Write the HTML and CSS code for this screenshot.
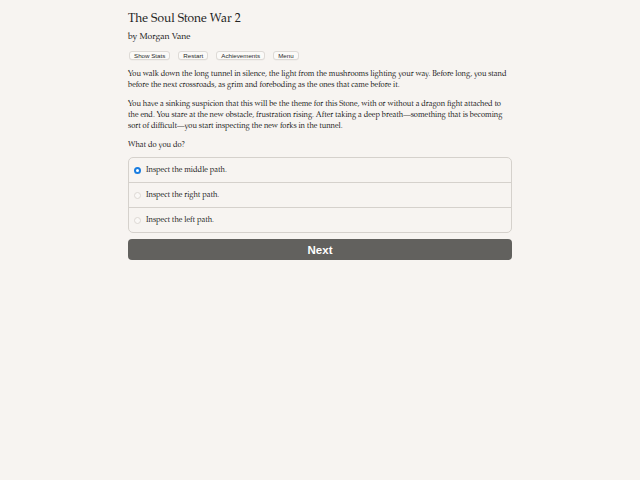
FILE: index.html
```html
<!DOCTYPE html>
<html>
<head>
<meta charset="utf-8">
<link rel="stylesheet" href="styles.css">
</head>
<body>
<div class="page">
  <h1 class="title">The Soul Stone War 2</h1>
  <p class="author">by Morgan Vane</p>
  <div class="toolbar">
    <button class="tool">Show Stats</button>
    <button class="tool">Restart</button>
    <button class="tool">Achievements</button>
    <button class="tool">Menu</button>
  </div>
  <p class="text">You walk down the long tunnel in silence, the light from the mushrooms lighting your way. Before long, you stand before the next crossroads, as grim and foreboding as the ones that came before it.</p>
  <p class="text">You have a sinking suspicion that this will be the theme for this Stone, with or without a dragon fight attached to the end. You stare at the new obstacle, frustration rising. After taking a deep breath—something that is becoming sort of difficult—you start inspecting the new forks in the tunnel.</p>
  <p class="text">What do you do?</p>
  <div class="choices">
    <label class="choice"><span class="radio checked"></span>Inspect the middle path.</label>
    <label class="choice"><span class="radio"></span>Inspect the right path.</label>
    <label class="choice"><span class="radio"></span>Inspect the left path.</label>
  </div>
  <button class="next">Next</button>
</div>
</body>
</html>
```

FILE: styles.css
```css
html, body {
  margin: 0;
  padding: 0;
  background: #f7f4f1;
}

.page {
  width: 384px;
  margin: 0 auto;
  padding-top: 10px;
  font-family: "TeX Gyre Pagella", "Liberation Serif", serif;
  color: #222;
}

.title {
  margin: 0;
  font-size: 12px;
  font-weight: normal;
  line-height: 18px;
}

.author {
  margin: 2px 0 0;
  font-size: 8.6px;
  line-height: 14px;
}

.toolbar {
  display: flex;
  gap: 8px;
  margin-top: 7px;
  padding: 0 0 1px 1px;
}

.tool {
  font-family: "Liberation Sans", sans-serif;
  font-size: 6.2px;
  color: #2a2a2a;
  background: #fbfaf8;
  border: 1px solid #dedad6;
  border-radius: 3px;
  box-shadow: 0 0.5px 0 rgba(0, 0, 0, 0.05);
  height: 9px;
  padding: 0 4px;
  line-height: 7px;
}

.text {
  margin: 8px 0 0;
  font-size: 7.5px;
  line-height: 11px;
}

.choices {
  margin-top: 6px;
  border: 1px solid #d5d1cc;
  border-radius: 5px;
  overflow: hidden;
}

.choice {
  display: flex;
  align-items: center;
  height: 24px;
  padding-left: 5px;
  font-size: 7.5px;
  border-top: 1px solid #d5d1cc;
}

.choice:first-child {
  border-top: none;
}

.radio {
  width: 5px;
  height: 5px;
  border-radius: 50%;
  border: 1px solid #dcd8d4;
  background: #faf8f6;
  margin-right: 5px;
}

.radio.checked {
  width: 3px;
  height: 3px;
  border: 2px solid #1a7de0;
  background: #fff;
}

.next {
  display: block;
  width: 100%;
  margin-top: 6px;
  height: 21px;
  border: none;
  border-radius: 4px;
  background: #62615e;
  color: #fff;
  font-family: "Liberation Sans", sans-serif;
  font-weight: bold;
  font-size: 11.5px;
}
```
